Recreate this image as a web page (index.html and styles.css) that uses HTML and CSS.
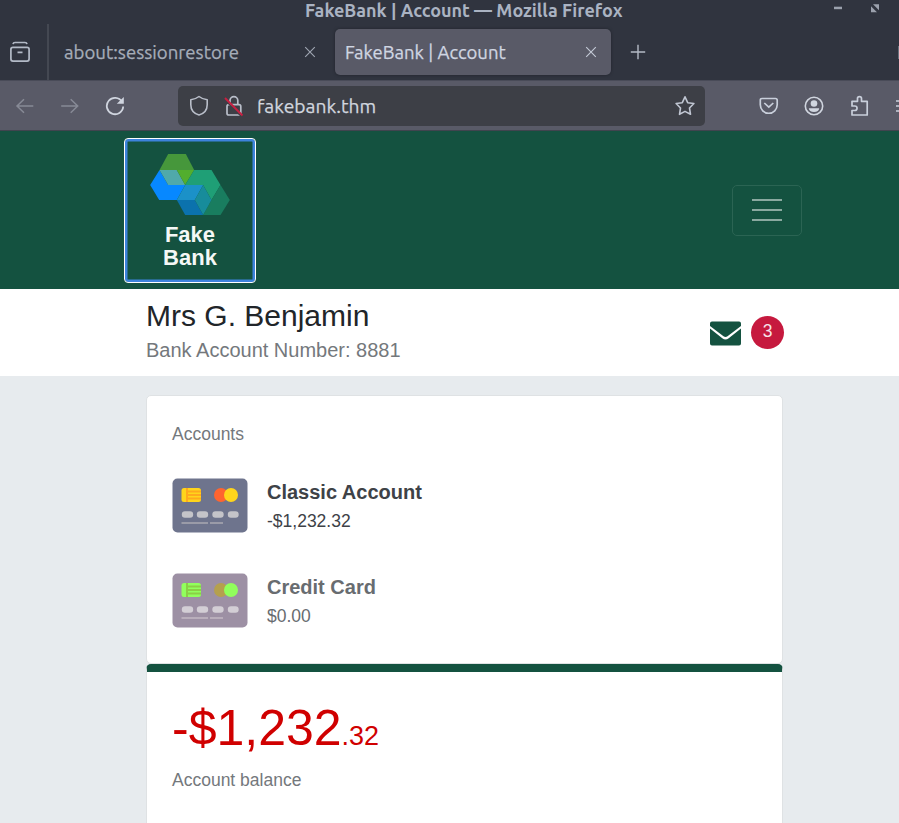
FILE: index.html
```
<!DOCTYPE html>
<html lang="en">
<head>
<meta charset="utf-8">
<title>FakeBank | Account</title>
<link rel="stylesheet" href="styles.css">
</head>
<body>
<div class="titlebar">
  <span class="window-title">FakeBank | Account — Mozilla Firefox</span>
  <svg class="window-controls" width="60" height="18" viewBox="0 0 60 18"><path d="M1 6.700h8v2.500H1z" fill="#9ba1ad"/><path d="M40 4.300h6v6zM38 6.300v6h6z" fill="#9ba1ad"/></svg>
</div>
<div class="tabbar">
  <div class="recent"><svg width="22" height="22" viewBox="0 0 22 22" fill="none" stroke="#b3bac7" stroke-width="1.700"><rect x="1.900" y="6.400" width="18.200" height="13.700" rx="2"/><path d="M4 3.200Q4.300 1.500 6 1.500h10q1.700 0 2 1.700M8.500 11.300h5"/></svg></div>
  <div class="tab tab-idle"><span>about:sessionrestore</span><svg width="12" height="12" viewBox="0 0 12 12"><path d="M1.200 1.200l9.600 9.600M10.800 1.200l-9.600 9.600" stroke="#a0a7b3" stroke-width="1.100"/></svg></div>
  <div class="tab tab-active"><span>FakeBank | Account</span><svg width="12" height="12" viewBox="0 0 12 12"><path d="M1.200 1.200l9.600 9.600M10.800 1.200l-9.600 9.600" stroke="#c5cbd7" stroke-width="1.100"/></svg></div>
  <svg class="new-tab" width="16" height="16" viewBox="0 0 16 16"><path d="M8 .8v14.400M.8 8h14.400" stroke="#b4bac6" stroke-width="1.400"/></svg>
  <span class="tab-overflow"></span>
</div>
<div class="navbar">
  <svg class="nav-back" width="20" height="18" viewBox="0 0 20 18" fill="none" stroke="#878a96" stroke-width="1.500"><path d="M18.300 9H2M9 2.200L2 9l7 6.800"/></svg>
  <svg class="nav-forward" width="20" height="18" viewBox="0 0 20 18" fill="none" stroke="#878a96" stroke-width="1.500"><path d="M1.200 9h16.500M10.700 2.200l7 6.800-7 6.800"/></svg>
  <svg class="nav-reload" width="20" height="20" viewBox="0 0 20 20"><path d="M17 5.700A8.200 8.200 0 1 0 18.200 10.500" fill="none" stroke="#d0d5df" stroke-width="1.800"/><path d="M18.800 1v6.800h-7z" fill="#d0d5df"/></svg>
  <div class="urlbar">
    <svg class="shield" width="20" height="22" viewBox="0 0 20 22"><path d="M10 1.500c2.500 2 5 2.700 8.200 3.200v5c0 5-3.200 8.800-8.200 10.300-5-1.500-8.200-5.300-8.200-10.300v-5C5 4.200 7.500 3.500 10 1.500z" fill="none" stroke="#b9bec9" stroke-width="1.600" stroke-linejoin="round"/></svg>
    <svg class="lock" width="20" height="22" viewBox="0 0 20 22"><rect x="3" y="9.700" width="13.800" height="10.300" rx="1.800" fill="none" stroke="#b9bec9" stroke-width="1.700"/><path d="M6 10V5.500a3.900 3.900 0 0 1 7.800 0V10" fill="none" stroke="#b9bec9" stroke-width="1.700"/><path d="M.5 4.500l17 17" stroke="#3d3f46" stroke-width="1.500"/><path d="M1 3l17.500 17.500" stroke="#c71f40" stroke-width="1.900"/></svg>
    <span class="url">fakebank.thm</span>
    <svg class="star" width="22" height="22" viewBox="0 0 22 22"><path d="M11 1.800l2.700 5.900 6.200.8-4.400 4.500 1 6.300-5.500-2.900-5.500 2.900 1-6.300-4.400-4.500 6.200-.8z" fill="none" stroke="#c0c6d2" stroke-width="1.600" stroke-linejoin="round"/></svg>
  </div>
  <svg class="pocket" width="20" height="20" viewBox="0 0 20 20" fill="none" stroke="#c9cfdb" stroke-width="1.700"><path d="M3 2.500h13.500q1.700 0 1.700 1.700v4.600a8.400 8.400 0 0 1-16.900 0V4.200Q1.300 2.500 3 2.500z"/><path d="M5.300 7l4.500 4.200L14.300 7"/></svg>
  <svg class="profile" width="20" height="20" viewBox="0 0 20 20"><circle cx="10" cy="10" r="8.700" fill="none" stroke="#d0d5df" stroke-width="1.600"/><circle cx="10" cy="7.500" r="3.300" fill="#d0d5df"/><path d="M4.800 12.200h10.400c0 2.300-2.100 3.900-5.200 3.900s-5.200-1.600-5.200-3.900z" fill="#d0d5df"/></svg>
  <svg class="extensions" width="20" height="22" viewBox="0 0 20 22"><path d="M2 6.300H7.500V3.600a2 2 0 0 1 4 0v2.700h5.700V20H2v-4.500h2.800a2 2 0 0 0 0-4.500H2z" fill="none" stroke="#c9cfdb" stroke-width="1.700" stroke-linejoin="round"/></svg>
  <svg class="app-menu" width="3" height="14" viewBox="0 0 3 14"><path d="M0 2h3M0 7h3M0 12h3" stroke="#c9cfdb" stroke-width="1.500"/></svg>
</div>
<header class="site-header">
  <a class="brand">
    <svg width="80" height="61" viewBox="121 87 239 183">
      <path fill="#46973b" d="M175 87h53l25 48H149z"/>
      <path fill="#0788ff" d="M149 135l-28 45 27 45h53l25-45h-51z"/>
      <path fill="#50a9aa" d="M149 135h52l25 45h-51z"/>
      <path fill="#52ae2e" d="M201 135h52l-27 45z"/>
      <path fill="#1f9f76" d="M253 135h52l27 45-27 45-25-45h-54z"/>
      <path fill="#197d5f" d="M332 180l28 45-28 45h-52l25-45z"/>
      <path fill="#0b72ad" d="M201 225h54l25 45h-54z"/>
      <path fill="#1b91c8" d="M226 180h54l-25 45h-54z"/>
      <path fill="#178c9b" d="M280 180l25 45-25 45-25-45z"/>
    </svg>
    <span>Fake<br>Bank</span>
  </a>
  <button class="menu-button" aria-label="Menu"><i></i><i></i><i></i></button>
</header>
<section class="customer">
  <div>
    <h1>Mrs G. Benjamin</h1>
    <p>Bank Account Number: 8881</p>
  </div>
  <div class="messages">
    <svg width="31" height="25" viewBox="0 0 31 25"><path fill="#145240" d="M2 .5h27a2 2 0 0 1 2 2V5L17.500 15.300q-2 1.500-4 0L0 5V2.500a2 2 0 0 1 2-2zM0 7.500l12.300 9.700q3.200 2.400 6.400 0L31 7.500v15a2 2 0 0 1-2 2H2a2 2 0 0 1-2-2z"/></svg>
    <span class="badge">3</span>
  </div>
</section>
<main>
  <section class="card accounts">
    <h2>Accounts</h2>
    <div class="account">
      <svg width="76" height="55" viewBox="0 0 76 55">
        <rect x=".5" y=".5" width="75" height="54" rx="5" fill="#6e748d"/>
        <rect x="9.500" y="10" width="19.500" height="14" rx="2.500" fill="#ffd51b"/>
        <path d="M14 10h2v14h-2zM16 12.500h13v2H16zM16 16h13v2H16zM16 19.500h13v2H16z" fill="#ffa91d"/>
        <circle cx="49" cy="17" r="7" fill="#ff642f"/><circle cx="59" cy="17" r="7" fill="#ffd51b"/>
        <path d="M13 36.500h5M28 36.500h5M43.500 36.500h5M59 36.500h4.500" stroke="#c4c4c9" stroke-width="6.400" stroke-linecap="round"/>
        <path d="M9.500 45h26.500M38 45h13" stroke="#9a9ba8" stroke-width="2"/>
      </svg>
      <div><h3>Classic Account</h3><p>-$1,232.32</p></div>
    </div>
    <div class="account muted">
      <svg width="76" height="55" viewBox="0 0 76 55">
        <rect x=".5" y=".5" width="75" height="54" rx="5" fill="#9d90a4"/>
        <rect x="9.500" y="10" width="19.500" height="14" rx="2.500" fill="#91ff5c"/>
        <path d="M14 10h2v14h-2zM16 12.500h13v2H16zM16 16h13v2H16zM16 19.500h13v2H16z" fill="#8bcf46"/>
        <circle cx="49" cy="17" r="7" fill="#b5a04d"/><circle cx="59" cy="17" r="7" fill="#91ff5c"/>
        <path d="M13 36.500h5M28 36.500h5M43.500 36.500h5M59 36.500h4.500" stroke="#d3ced5" stroke-width="6.400" stroke-linecap="round"/>
        <path d="M9.500 45h26.500M38 45h13" stroke="#b9aebb" stroke-width="2"/>
      </svg>
      <div><h3>Credit Card</h3><p>$0.00</p></div>
    </div>
  </section>
  <section class="card balance">
    <p class="amount">-$1,232<small>.32</small></p>
    <p class="caption">Account balance</p>
  </section>
</main>
</body>
</html>
```
FILE: styles.css
```
* { box-sizing: border-box; }
body { margin: 0; width: 899px; height: 823px; overflow: hidden; background: #e7ebee; color: #212529; font-family: "Liberation Sans", Arial, sans-serif; }
h1, h2, h3, p { margin: 0; font-weight: 400; }
svg { display: block; flex: none; }

.titlebar, .tabbar, .navbar { font-family: Ubuntu, "Noto Sans", sans-serif; white-space: nowrap; }
.titlebar { display: flex; height: 24px; padding-left: 305px; background: #30343f; }
.window-title { width: 528px; font-size: 18px; font-weight: 600; line-height: 20px; color: #aab3c2; }
.tabbar { display: flex; align-items: center; height: 56px; background: #30343f; }
.recent { display: flex; align-items: center; width: 49px; height: 56px; padding-left: 9px; border-right: 2px solid #444852; }
.tab { display: flex; align-items: center; justify-content: space-between; height: 46px; font-size: 18.600px; -webkit-text-stroke: .25px currentColor; }
.tab-idle { width: 286px; padding: 0 19px 0 15px; color: #a6adb9; }
.tab-active { width: 276px; padding: 0 14px 0 10px; border-radius: 5px; background: #595a67; box-shadow: 0 0 3px #20232b; color: #d0d6e2; font-size: 18.500px; }
.new-tab { margin-left: 19px; }
.tab-overflow { width: 1px; height: 13px; margin-left: auto; background: #68717d; }
.navbar { display: flex; align-items: center; height: 51px; border-top: 1px solid #494b58; border-bottom: 1px solid #41444f; background: #595a67; }
.nav-back { margin-left: 15px; }
.nav-forward { margin-left: 25px; }
.nav-reload { margin-left: 25px; }
.urlbar { display: flex; align-items: center; width: 527px; height: 40px; margin-left: 53px; padding: 0 9px 0 11px; border-radius: 5px; background: #3d3f46; }
.lock { margin-left: 15px; }
.url { margin-left: 13px; font-size: 19.300px; color: #d1d6df; -webkit-text-stroke: .25px currentColor; }
.star { margin-left: auto; }
.pocket { margin-left: 54px; }
.profile { margin-left: 25px; }
.extensions { margin-left: 26px; }
.app-menu { margin-left: auto; }

.site-header { display: flex; align-items: center; justify-content: space-between; height: 158px; padding: 0 97px 0 124px; background: #145240; }
.brand { display: flex; flex-direction: column; align-items: center; width: 132px; height: 145px; padding-top: 14px; border: 1.500px solid #fff; border-radius: 4px; box-shadow: inset 0 0 0 2.500px #3d83dc; font-size: 22px; font-weight: 700; line-height: 23px; text-align: center; color: #f4f8f6; }
.brand svg { margin-top: 1px; }
.brand span { margin-top: 8px; }
.menu-button { display: flex; flex-direction: column; align-items: center; justify-content: center; gap: 8px; width: 70px; height: 51px; padding: 0; border: 1px solid #2b6453; border-radius: 5px; background: none; }
.menu-button i { width: 30px; height: 2px; background: #8aa9a0; }

.customer { display: flex; justify-content: space-between; height: 87px; padding: 8px 115px 0 146px; background: #fff; }
.customer h1 { font-size: 30px; line-height: 38px; }
.customer p { margin-top: 1px; font-size: 20px; line-height: 28px; color: #74787c; }
.messages { display: flex; align-items: center; gap: 10px; height: 70px; }
.messages svg { margin-top: 2px; }
.badge { width: 33px; height: 33px; border-radius: 50%; background: #c6193e; color: #f7e3e8; font-size: 17.500px; line-height: 31px; text-align: center; }

main { width: 637px; margin: 19px 0 0 146px; }
.card { border: 1px solid #dfe2e4; border-radius: 5px; background: #fff; }
.accounts { height: 269px; padding: 28px 25px 0; }
.accounts h2, .caption { font-size: 17.500px; line-height: 20px; color: #74787c; }
.account { display: flex; gap: 19px; height: 55px; margin-top: 34px; color: #3e4247; }
.account + .account { margin-top: 40px; }
.account h3 { font-size: 20px; font-weight: 700; line-height: 28px; }
.account p { font-size: 17.500px; line-height: 30px; }
.muted { color: #686c70; }
.balance { height: 200px; padding: 26px 25px 0; border-top: 8px solid #145240; }
.amount { font-size: 50px; line-height: 60px; color: #d00000; }
.amount small { font-size: 27px; }
.caption { margin-top: 4px; }
```
